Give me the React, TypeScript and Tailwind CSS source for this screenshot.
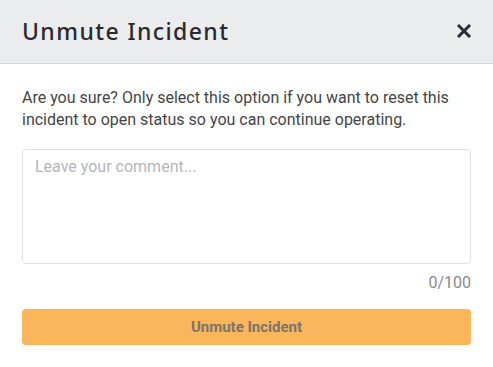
export default function App() {
  return (
    <div className="w-[493px] h-[367px] bg-white" style={{ fontFamily: "Roboto, sans-serif" }}>
      <div className="h-[64px] bg-[#ebecee] border-b border-[#d4d5d8] flex items-center justify-between pl-[22px] pr-[22px]">
        <h1 className="text-[23px] font-medium text-[#2a2a2e] tracking-[1.4px]" style={{ fontFamily: "'Noto Sans', sans-serif" }}>
          Unmute Incident
        </h1>
        <svg width="14" height="14" viewBox="0 0 14 14" className="mt-[-2px]">
          <path d="M2 2 L12 12 M12 2 L2 12" stroke="#2a2d35" strokeWidth="3" strokeLinecap="square" />
        </svg>
      </div>
      <div className="px-[22px] pt-[23px]">
        <p className="text-[16px] leading-[22px] text-[#454545]">
          Are you sure? Only select this option if you want to reset this incident to open status so you can continue operating.
        </p>
        <textarea
          placeholder="Leave your comment..."
          className="mt-[18px] block w-full h-[115px] border border-[#e0e0e0] rounded-[4px] px-[12px] py-[7px] text-[16px] leading-[20px] placeholder:text-[#b3b6bd] resize-none outline-none"
        />
        <div className="text-right text-[16px] leading-[20px] text-[#8a8a8a] mt-[9px]">0/100</div>
        <button className="mt-[16px] w-full h-[36px] bg-[#fbb55a] rounded-[4px] text-[15px] font-bold text-[#7a7471]">
          Unmute Incident
        </button>
      </div>
    </div>
  );
}
